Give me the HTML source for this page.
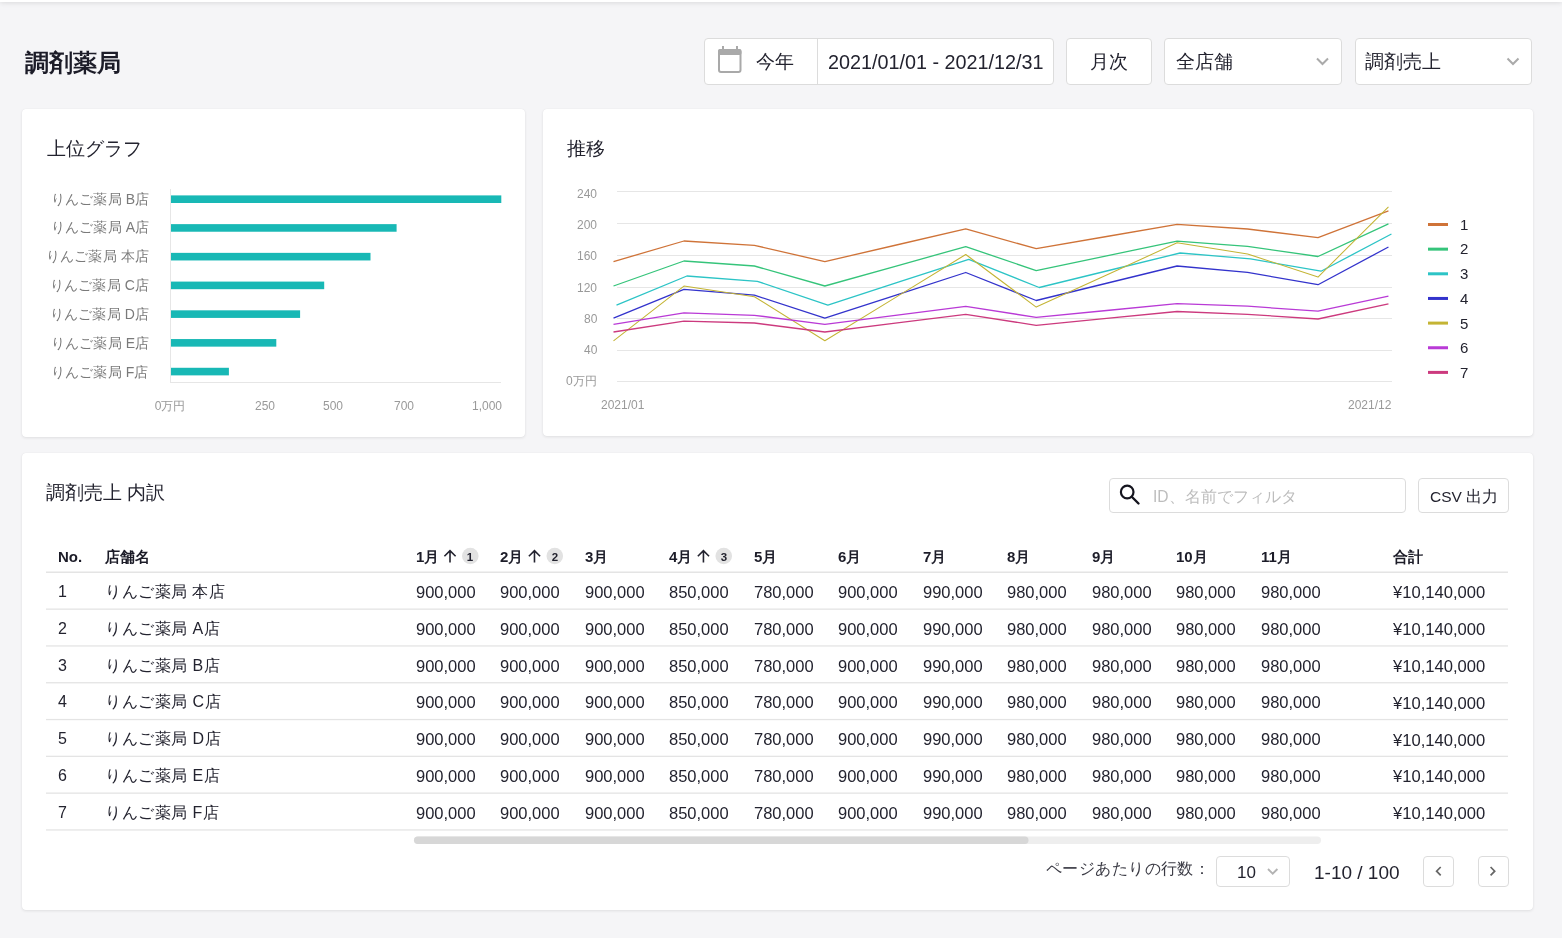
<!DOCTYPE html><html lang="ja"><head><meta charset="utf-8"><title>調剤薬局</title><style>
*{box-sizing:border-box;margin:0;padding:0}
html,body{width:1562px;height:938px;overflow:hidden;background:#f5f5f7;font-family:"Liberation Sans",sans-serif;color:#23232f}
.t{position:absolute;white-space:nowrap;line-height:1;will-change:transform}
.box{position:absolute;background:#fff;border:1px solid #dcdcdc;border-radius:4px}
.card{position:absolute;background:#fff;border-radius:4px;box-shadow:0 1px 3px rgba(0,0,0,0.09),0 0 1px rgba(0,0,0,0.10)}
.hdr{position:absolute;left:0;top:-60px;width:1562px;height:62px;background:#fff;box-shadow:0 1px 5px rgba(0,0,0,0.11)}
svg{position:absolute;left:0;top:0}
</style></head><body>
<div class="hdr"></div>
<div class="t" style="left:25px;top:51.6px;font-size:23.6px;color:#1c1c28;font-weight:bold;">調剤薬局</div>
<div class="box" style="left:704px;top:38px;width:350px;height:47px"></div>
<div style="position:absolute;left:817px;top:39px;width:1px;height:45px;background:#dcdcdc"></div>
<svg width="1562" height="938" style="pointer-events:none"><rect x="719" y="50" width="21.5" height="22" rx="2" fill="none" stroke="#a9a9a9" stroke-width="2"/><rect x="718" y="49" width="23.5" height="6" rx="2" fill="#a9a9a9"/><rect x="722" y="46" width="2" height="4" fill="#a9a9a9"/><rect x="736" y="46" width="2" height="4" fill="#a9a9a9"/></svg>
<div class="t" style="left:756px;top:51.5px;font-size:19px;color:#23232f;font-weight:normal;">今年</div>
<div class="t" style="left:827.5px;top:52.8px;font-size:19.8px;color:#23232f;font-weight:normal;">2021/01/01 - 2021/12/31</div>
<div class="box" style="left:1066px;top:38px;width:86px;height:47px"></div>
<div class="t" style="left:1089.5px;top:51.7px;font-size:19px;color:#23232f;font-weight:normal;">月次</div>
<div class="box" style="left:1164px;top:38px;width:178px;height:47px"></div>
<div class="t" style="left:1175.6px;top:52px;font-size:19px;color:#23232f;font-weight:normal;">全店舗</div>
<div class="box" style="left:1355px;top:38px;width:177px;height:47px"></div>
<div class="t" style="left:1365px;top:52px;font-size:19px;color:#23232f;font-weight:normal;">調剤売上</div>
<svg width="1562" height="938"><path d="M1317 58.5 L1322.5 64.0 L1328 58.5" fill="none" stroke="#aaaaaa" stroke-width="2"/><path d="M1507.5 58.5 L1513.0 64.0 L1518.5 58.5" fill="none" stroke="#aaaaaa" stroke-width="2"/></svg>
<div class="card" style="left:22px;top:109px;width:503px;height:328px"></div>
<div class="card" style="left:543px;top:109px;width:990px;height:327px"></div>
<div class="card" style="left:22px;top:453px;width:1511px;height:457px"></div>
<div class="t" style="left:46.5px;top:139px;font-size:19px;color:#23232f;font-weight:normal;">上位グラフ</div>
<svg width="1562" height="938"><rect x="170" y="189" width="1" height="194" fill="#e6e6e6"/><rect x="170" y="382" width="331" height="1" fill="#e6e6e6"/><rect x="171" y="195.40" width="330.30" height="7.6" fill="#18b8b5"/><rect x="171" y="224.13" width="225.60" height="7.6" fill="#18b8b5"/><rect x="171" y="252.86" width="199.50" height="7.6" fill="#18b8b5"/><rect x="171" y="281.59" width="153.20" height="7.6" fill="#18b8b5"/><rect x="171" y="310.32" width="129.10" height="7.6" fill="#18b8b5"/><rect x="171" y="339.05" width="105.30" height="7.6" fill="#18b8b5"/><rect x="171" y="367.78" width="57.90" height="7.6" fill="#18b8b5"/></svg>
<div class="t" style="right:1413px;top:191.5px;font-size:14px;letter-spacing:0.15px;color:#7a7a7a">りんご薬局 B店</div>
<div class="t" style="right:1413px;top:220.3px;font-size:14px;letter-spacing:0.15px;color:#7a7a7a">りんご薬局 A店</div>
<div class="t" style="right:1413px;top:249.2px;font-size:14px;letter-spacing:0.15px;color:#7a7a7a">りんご薬局 本店</div>
<div class="t" style="right:1413px;top:278.1px;font-size:14px;letter-spacing:0.15px;color:#7a7a7a">りんご薬局 C店</div>
<div class="t" style="right:1413px;top:306.9px;font-size:14px;letter-spacing:0.15px;color:#7a7a7a">りんご薬局 D店</div>
<div class="t" style="right:1413px;top:335.8px;font-size:14px;letter-spacing:0.15px;color:#7a7a7a">りんご薬局 E店</div>
<div class="t" style="right:1413px;top:364.6px;font-size:14px;letter-spacing:0.15px;color:#7a7a7a">りんご薬局 F店</div>
<div class="t" style="left:130px;width:80px;text-align:center;top:400px;font-size:12px;color:#999">0万円</div>
<div class="t" style="left:224.8px;width:80px;text-align:center;top:400px;font-size:12px;color:#999">250</div>
<div class="t" style="left:293.4px;width:80px;text-align:center;top:400px;font-size:12px;color:#999">500</div>
<div class="t" style="left:363.6px;width:80px;text-align:center;top:400px;font-size:12px;color:#999">700</div>
<div class="t" style="left:447px;width:80px;text-align:center;top:400px;font-size:12px;color:#999">1,000</div>
<div class="t" style="left:567px;top:139px;font-size:19px;color:#23232f;font-weight:normal;">推移</div>
<svg width="1562" height="938"><rect x="617" y="191" width="775" height="1" fill="#e6e6e6"/><rect x="617" y="223" width="775" height="1" fill="#e6e6e6"/><rect x="617" y="255" width="775" height="1" fill="#e6e6e6"/><rect x="617" y="287" width="775" height="1" fill="#e6e6e6"/><rect x="617" y="318" width="775" height="1" fill="#e6e6e6"/><rect x="617" y="350" width="775" height="1" fill="#e6e6e6"/><rect x="617" y="381" width="775" height="1" fill="#e6e6e6"/><polyline points="613.50,261.60 683.95,241.00 754.40,245.30 824.85,261.60 895.30,245.25 965.75,228.90 1036.20,248.70 1106.65,236.50 1177.10,224.30 1247.55,229.00 1318.00,237.60 1388.45,210.80" fill="none" stroke="#cf7338" stroke-width="1.3" stroke-linejoin="round"/><polyline points="613.50,286.00 683.95,261.00 754.40,266.00 824.85,286.00 895.30,266.30 965.75,246.60 1036.20,270.60 1106.65,255.85 1177.10,241.10 1247.55,246.30 1318.00,256.50 1388.45,223.80" fill="none" stroke="#35c47a" stroke-width="1.3" stroke-linejoin="round"/><polyline points="616.50,305.10 686.95,276.00 757.40,281.30 827.85,305.10 898.30,282.20 968.75,259.30 1039.20,287.50 1109.65,270.25 1180.10,253.00 1250.55,258.90 1321.00,271.20 1391.45,234.00" fill="none" stroke="#2cc4c6" stroke-width="1.3" stroke-linejoin="round"/><polyline points="613.50,318.20 683.95,289.40 754.40,295.20 824.85,318.20 895.30,295.35 965.75,272.50 1036.20,300.50 1106.65,283.25 1177.10,266.00 1247.55,272.40 1318.00,284.70 1388.45,247.00" fill="none" stroke="#3333cc" stroke-width="1.3" stroke-linejoin="round"/><polyline points="613.50,340.80 683.95,286.10 754.40,296.70 824.85,340.80 895.30,297.65 965.75,254.50 1036.20,307.10 1106.65,274.95 1177.10,242.80 1247.55,253.90 1318.00,277.10 1388.45,206.80" fill="none" stroke="#c4b434" stroke-width="1.05" stroke-linejoin="round"/><polyline points="613.50,324.30 683.95,312.80 754.40,315.30 824.85,324.30 895.30,315.30 965.75,306.30 1036.20,317.40 1106.65,310.50 1177.10,303.60 1247.55,306.20 1318.00,311.20 1388.45,296.10" fill="none" stroke="#b93ad6" stroke-width="1.3" stroke-linejoin="round"/><polyline points="613.50,332.00 683.95,321.10 754.40,323.00 824.85,332.00 895.30,323.20 965.75,314.40 1036.20,325.30 1106.65,318.40 1177.10,311.50 1247.55,314.30 1318.00,319.00 1388.45,303.90" fill="none" stroke="#cc3a7e" stroke-width="1.3" stroke-linejoin="round"/><rect x="1428" y="223.00" width="20" height="3" fill="#cf7338"/><rect x="1428" y="247.65" width="20" height="3" fill="#35c47a"/><rect x="1428" y="272.30" width="20" height="3" fill="#2cc4c6"/><rect x="1428" y="296.95" width="20" height="3" fill="#3333cc"/><rect x="1428" y="321.60" width="20" height="3" fill="#c4b434"/><rect x="1428" y="346.25" width="20" height="3" fill="#b93ad6"/><rect x="1428" y="370.90" width="20" height="3" fill="#cc3a7e"/></svg>
<div class="t" style="right:965px;top:187.8px;font-size:12px;color:#999">240</div>
<div class="t" style="right:965px;top:219.0px;font-size:12px;color:#999">200</div>
<div class="t" style="right:965px;top:250.3px;font-size:12px;color:#999">160</div>
<div class="t" style="right:965px;top:281.6px;font-size:12px;color:#999">120</div>
<div class="t" style="right:965px;top:312.8px;font-size:12px;color:#999">80</div>
<div class="t" style="right:965px;top:344.1px;font-size:12px;color:#999">40</div>
<div class="t" style="right:965px;top:375.4px;font-size:12px;color:#999">0万円</div>
<div class="t" style="left:600.5px;top:399px;font-size:12px;color:#999;font-weight:normal;">2021/01</div>
<div class="t" style="right:171px;top:399px;font-size:12px;color:#999">2021/12</div>
<div class="t" style="left:1459.5px;top:216.5px;font-size:15px;color:#23232f;font-weight:normal;">1</div>
<div class="t" style="left:1459.5px;top:241.28px;font-size:15px;color:#23232f;font-weight:normal;">2</div>
<div class="t" style="left:1459.5px;top:266.06px;font-size:15px;color:#23232f;font-weight:normal;">3</div>
<div class="t" style="left:1459.5px;top:290.84000000000003px;font-size:15px;color:#23232f;font-weight:normal;">4</div>
<div class="t" style="left:1459.5px;top:315.62px;font-size:15px;color:#23232f;font-weight:normal;">5</div>
<div class="t" style="left:1459.5px;top:340.4px;font-size:15px;color:#23232f;font-weight:normal;">6</div>
<div class="t" style="left:1459.5px;top:365.18px;font-size:15px;color:#23232f;font-weight:normal;">7</div>
<div class="t" style="left:46px;top:484px;font-size:18.5px;color:#23232f;font-weight:normal;">調剤売上 内訳</div>
<div class="box" style="left:1109px;top:478px;width:297px;height:35px"></div>
<svg width="1562" height="938"><circle cx="1127.2" cy="492" r="6.3" fill="none" stroke="#15151f" stroke-width="2.2"/><path d="M1132 497 L1138.5 503.5" stroke="#15151f" stroke-width="2.4" stroke-linecap="round"/></svg>
<div class="t" style="left:1152.5px;top:489px;font-size:15.6px;color:#bdbdbd;font-weight:normal;">ID、名前でフィルタ</div>
<div class="box" style="left:1418px;top:478px;width:91px;height:35px"></div>
<div class="t" style="left:1430px;top:488.5px;font-size:15.5px;color:#23232f;font-weight:normal;">CSV 出力</div>
<div class="t" style="left:58px;top:548.5px;font-size:15px;color:#1c1c28;font-weight:bold;">No.</div>
<div class="t" style="left:104.5px;top:548.5px;font-size:15px;color:#1c1c28;font-weight:bold;">店舗名</div>
<div class="t" style="left:415.9px;top:548.5px;font-size:15px;color:#1c1c28;font-weight:bold;">1月</div>
<div class="t" style="left:500.38px;top:548.5px;font-size:15px;color:#1c1c28;font-weight:bold;">2月</div>
<div class="t" style="left:584.86px;top:548.5px;font-size:15px;color:#1c1c28;font-weight:bold;">3月</div>
<div class="t" style="left:669.3399999999999px;top:548.5px;font-size:15px;color:#1c1c28;font-weight:bold;">4月</div>
<div class="t" style="left:753.8199999999999px;top:548.5px;font-size:15px;color:#1c1c28;font-weight:bold;">5月</div>
<div class="t" style="left:838.3px;top:548.5px;font-size:15px;color:#1c1c28;font-weight:bold;">6月</div>
<div class="t" style="left:922.78px;top:548.5px;font-size:15px;color:#1c1c28;font-weight:bold;">7月</div>
<div class="t" style="left:1007.26px;top:548.5px;font-size:15px;color:#1c1c28;font-weight:bold;">8月</div>
<div class="t" style="left:1091.74px;top:548.5px;font-size:15px;color:#1c1c28;font-weight:bold;">9月</div>
<div class="t" style="left:1176.22px;top:548.5px;font-size:15px;color:#1c1c28;font-weight:bold;">10月</div>
<div class="t" style="left:1260.7px;top:548.5px;font-size:15px;color:#1c1c28;font-weight:bold;">11月</div>
<div class="t" style="left:1392.8px;top:548.5px;font-size:15px;color:#1c1c28;font-weight:bold;">合計</div>
<svg width="1562" height="938"><path d="M444.4 556.3 L450.0 550.7 L455.6 556.3 M450.0 551.2 L450.0 562.6" fill="none" stroke="#23232f" stroke-width="1.6"/><circle cx="470.30" cy="556" r="8.3" fill="#e2e2e2"/><path d="M528.88 556.3 L534.48 550.7 L540.08 556.3 M534.48 551.2 L534.48 562.6" fill="none" stroke="#23232f" stroke-width="1.6"/><circle cx="554.78" cy="556" r="8.3" fill="#e2e2e2"/><path d="M697.8399999999999 556.3 L703.4399999999999 550.7 L709.04 556.3 M703.4399999999999 551.2 L703.4399999999999 562.6" fill="none" stroke="#23232f" stroke-width="1.6"/><circle cx="723.74" cy="556" r="8.3" fill="#e2e2e2"/><rect x="46" y="571.5" width="1462" height="1.5" fill="#e4e4e4"/><rect x="46" y="608.50" width="1462" height="1.3" fill="#e4e4e4"/><rect x="46" y="645.30" width="1462" height="1.3" fill="#e4e4e4"/><rect x="46" y="682.10" width="1462" height="1.3" fill="#e4e4e4"/><rect x="46" y="718.90" width="1462" height="1.3" fill="#e4e4e4"/><rect x="46" y="755.70" width="1462" height="1.3" fill="#e4e4e4"/><rect x="46" y="792.50" width="1462" height="1.3" fill="#e4e4e4"/><rect x="46" y="829.30" width="1462" height="1.3" fill="#e4e4e4"/><rect x="414" y="836.5" width="907" height="7.5" rx="3.75" fill="#eeeeee"/><rect x="414" y="836.5" width="614.5" height="7.5" rx="3.75" fill="#d7d7d7"/></svg>
<div class="t" style="left:462.30px;width:16px;text-align:center;top:551.5px;font-size:11.5px;font-weight:bold;color:#23232f">1</div>
<div class="t" style="left:546.78px;width:16px;text-align:center;top:551.5px;font-size:11.5px;font-weight:bold;color:#23232f">2</div>
<div class="t" style="left:715.74px;width:16px;text-align:center;top:551.5px;font-size:11.5px;font-weight:bold;color:#23232f">3</div>
<div class="t" style="left:58px;top:584.0px;font-size:16px;color:#23232f;font-weight:normal;">1</div>
<div class="t" style="left:104.5px;top:584.0px;font-size:16px;color:#23232f;font-weight:normal;letter-spacing:0.5px">りんご薬局 本店</div>
<div class="t" style="left:415.9px;top:584.0px;font-size:16.5px;color:#23232f;font-weight:normal;">900,000</div>
<div class="t" style="left:500.38px;top:584.0px;font-size:16.5px;color:#23232f;font-weight:normal;">900,000</div>
<div class="t" style="left:584.86px;top:584.0px;font-size:16.5px;color:#23232f;font-weight:normal;">900,000</div>
<div class="t" style="left:669.3399999999999px;top:584.0px;font-size:16.5px;color:#23232f;font-weight:normal;">850,000</div>
<div class="t" style="left:753.8199999999999px;top:584.0px;font-size:16.5px;color:#23232f;font-weight:normal;">780,000</div>
<div class="t" style="left:838.3px;top:584.0px;font-size:16.5px;color:#23232f;font-weight:normal;">900,000</div>
<div class="t" style="left:922.78px;top:584.0px;font-size:16.5px;color:#23232f;font-weight:normal;">990,000</div>
<div class="t" style="left:1007.26px;top:584.0px;font-size:16.5px;color:#23232f;font-weight:normal;">980,000</div>
<div class="t" style="left:1091.74px;top:584.0px;font-size:16.5px;color:#23232f;font-weight:normal;">980,000</div>
<div class="t" style="left:1176.22px;top:584.0px;font-size:16.5px;color:#23232f;font-weight:normal;">980,000</div>
<div class="t" style="left:1260.7px;top:584.0px;font-size:16.5px;color:#23232f;font-weight:normal;">980,000</div>
<div class="t" style="left:1392.8px;top:585.3px;font-size:16.6px;color:#23232f;font-weight:normal;">¥10,140,000</div>
<div class="t" style="left:58px;top:620.8px;font-size:16px;color:#23232f;font-weight:normal;">2</div>
<div class="t" style="left:104.5px;top:620.8px;font-size:16px;color:#23232f;font-weight:normal;letter-spacing:0.5px">りんご薬局 A店</div>
<div class="t" style="left:415.9px;top:620.8px;font-size:16.5px;color:#23232f;font-weight:normal;">900,000</div>
<div class="t" style="left:500.38px;top:620.8px;font-size:16.5px;color:#23232f;font-weight:normal;">900,000</div>
<div class="t" style="left:584.86px;top:620.8px;font-size:16.5px;color:#23232f;font-weight:normal;">900,000</div>
<div class="t" style="left:669.3399999999999px;top:620.8px;font-size:16.5px;color:#23232f;font-weight:normal;">850,000</div>
<div class="t" style="left:753.8199999999999px;top:620.8px;font-size:16.5px;color:#23232f;font-weight:normal;">780,000</div>
<div class="t" style="left:838.3px;top:620.8px;font-size:16.5px;color:#23232f;font-weight:normal;">900,000</div>
<div class="t" style="left:922.78px;top:620.8px;font-size:16.5px;color:#23232f;font-weight:normal;">990,000</div>
<div class="t" style="left:1007.26px;top:620.8px;font-size:16.5px;color:#23232f;font-weight:normal;">980,000</div>
<div class="t" style="left:1091.74px;top:620.8px;font-size:16.5px;color:#23232f;font-weight:normal;">980,000</div>
<div class="t" style="left:1176.22px;top:620.8px;font-size:16.5px;color:#23232f;font-weight:normal;">980,000</div>
<div class="t" style="left:1260.7px;top:620.8px;font-size:16.5px;color:#23232f;font-weight:normal;">980,000</div>
<div class="t" style="left:1392.8px;top:622.0999999999999px;font-size:16.6px;color:#23232f;font-weight:normal;">¥10,140,000</div>
<div class="t" style="left:58px;top:657.6px;font-size:16px;color:#23232f;font-weight:normal;">3</div>
<div class="t" style="left:104.5px;top:657.6px;font-size:16px;color:#23232f;font-weight:normal;letter-spacing:0.5px">りんご薬局 B店</div>
<div class="t" style="left:415.9px;top:657.6px;font-size:16.5px;color:#23232f;font-weight:normal;">900,000</div>
<div class="t" style="left:500.38px;top:657.6px;font-size:16.5px;color:#23232f;font-weight:normal;">900,000</div>
<div class="t" style="left:584.86px;top:657.6px;font-size:16.5px;color:#23232f;font-weight:normal;">900,000</div>
<div class="t" style="left:669.3399999999999px;top:657.6px;font-size:16.5px;color:#23232f;font-weight:normal;">850,000</div>
<div class="t" style="left:753.8199999999999px;top:657.6px;font-size:16.5px;color:#23232f;font-weight:normal;">780,000</div>
<div class="t" style="left:838.3px;top:657.6px;font-size:16.5px;color:#23232f;font-weight:normal;">900,000</div>
<div class="t" style="left:922.78px;top:657.6px;font-size:16.5px;color:#23232f;font-weight:normal;">990,000</div>
<div class="t" style="left:1007.26px;top:657.6px;font-size:16.5px;color:#23232f;font-weight:normal;">980,000</div>
<div class="t" style="left:1091.74px;top:657.6px;font-size:16.5px;color:#23232f;font-weight:normal;">980,000</div>
<div class="t" style="left:1176.22px;top:657.6px;font-size:16.5px;color:#23232f;font-weight:normal;">980,000</div>
<div class="t" style="left:1260.7px;top:657.6px;font-size:16.5px;color:#23232f;font-weight:normal;">980,000</div>
<div class="t" style="left:1392.8px;top:658.9px;font-size:16.6px;color:#23232f;font-weight:normal;">¥10,140,000</div>
<div class="t" style="left:58px;top:694.4px;font-size:16px;color:#23232f;font-weight:normal;">4</div>
<div class="t" style="left:104.5px;top:694.4px;font-size:16px;color:#23232f;font-weight:normal;letter-spacing:0.5px">りんご薬局 C店</div>
<div class="t" style="left:415.9px;top:694.4px;font-size:16.5px;color:#23232f;font-weight:normal;">900,000</div>
<div class="t" style="left:500.38px;top:694.4px;font-size:16.5px;color:#23232f;font-weight:normal;">900,000</div>
<div class="t" style="left:584.86px;top:694.4px;font-size:16.5px;color:#23232f;font-weight:normal;">900,000</div>
<div class="t" style="left:669.3399999999999px;top:694.4px;font-size:16.5px;color:#23232f;font-weight:normal;">850,000</div>
<div class="t" style="left:753.8199999999999px;top:694.4px;font-size:16.5px;color:#23232f;font-weight:normal;">780,000</div>
<div class="t" style="left:838.3px;top:694.4px;font-size:16.5px;color:#23232f;font-weight:normal;">900,000</div>
<div class="t" style="left:922.78px;top:694.4px;font-size:16.5px;color:#23232f;font-weight:normal;">990,000</div>
<div class="t" style="left:1007.26px;top:694.4px;font-size:16.5px;color:#23232f;font-weight:normal;">980,000</div>
<div class="t" style="left:1091.74px;top:694.4px;font-size:16.5px;color:#23232f;font-weight:normal;">980,000</div>
<div class="t" style="left:1176.22px;top:694.4px;font-size:16.5px;color:#23232f;font-weight:normal;">980,000</div>
<div class="t" style="left:1260.7px;top:694.4px;font-size:16.5px;color:#23232f;font-weight:normal;">980,000</div>
<div class="t" style="left:1392.8px;top:695.6999999999999px;font-size:16.6px;color:#23232f;font-weight:normal;">¥10,140,000</div>
<div class="t" style="left:58px;top:731.2px;font-size:16px;color:#23232f;font-weight:normal;">5</div>
<div class="t" style="left:104.5px;top:731.2px;font-size:16px;color:#23232f;font-weight:normal;letter-spacing:0.5px">りんご薬局 D店</div>
<div class="t" style="left:415.9px;top:731.2px;font-size:16.5px;color:#23232f;font-weight:normal;">900,000</div>
<div class="t" style="left:500.38px;top:731.2px;font-size:16.5px;color:#23232f;font-weight:normal;">900,000</div>
<div class="t" style="left:584.86px;top:731.2px;font-size:16.5px;color:#23232f;font-weight:normal;">900,000</div>
<div class="t" style="left:669.3399999999999px;top:731.2px;font-size:16.5px;color:#23232f;font-weight:normal;">850,000</div>
<div class="t" style="left:753.8199999999999px;top:731.2px;font-size:16.5px;color:#23232f;font-weight:normal;">780,000</div>
<div class="t" style="left:838.3px;top:731.2px;font-size:16.5px;color:#23232f;font-weight:normal;">900,000</div>
<div class="t" style="left:922.78px;top:731.2px;font-size:16.5px;color:#23232f;font-weight:normal;">990,000</div>
<div class="t" style="left:1007.26px;top:731.2px;font-size:16.5px;color:#23232f;font-weight:normal;">980,000</div>
<div class="t" style="left:1091.74px;top:731.2px;font-size:16.5px;color:#23232f;font-weight:normal;">980,000</div>
<div class="t" style="left:1176.22px;top:731.2px;font-size:16.5px;color:#23232f;font-weight:normal;">980,000</div>
<div class="t" style="left:1260.7px;top:731.2px;font-size:16.5px;color:#23232f;font-weight:normal;">980,000</div>
<div class="t" style="left:1392.8px;top:732.5px;font-size:16.6px;color:#23232f;font-weight:normal;">¥10,140,000</div>
<div class="t" style="left:58px;top:768.0px;font-size:16px;color:#23232f;font-weight:normal;">6</div>
<div class="t" style="left:104.5px;top:768.0px;font-size:16px;color:#23232f;font-weight:normal;letter-spacing:0.5px">りんご薬局 E店</div>
<div class="t" style="left:415.9px;top:768.0px;font-size:16.5px;color:#23232f;font-weight:normal;">900,000</div>
<div class="t" style="left:500.38px;top:768.0px;font-size:16.5px;color:#23232f;font-weight:normal;">900,000</div>
<div class="t" style="left:584.86px;top:768.0px;font-size:16.5px;color:#23232f;font-weight:normal;">900,000</div>
<div class="t" style="left:669.3399999999999px;top:768.0px;font-size:16.5px;color:#23232f;font-weight:normal;">850,000</div>
<div class="t" style="left:753.8199999999999px;top:768.0px;font-size:16.5px;color:#23232f;font-weight:normal;">780,000</div>
<div class="t" style="left:838.3px;top:768.0px;font-size:16.5px;color:#23232f;font-weight:normal;">900,000</div>
<div class="t" style="left:922.78px;top:768.0px;font-size:16.5px;color:#23232f;font-weight:normal;">990,000</div>
<div class="t" style="left:1007.26px;top:768.0px;font-size:16.5px;color:#23232f;font-weight:normal;">980,000</div>
<div class="t" style="left:1091.74px;top:768.0px;font-size:16.5px;color:#23232f;font-weight:normal;">980,000</div>
<div class="t" style="left:1176.22px;top:768.0px;font-size:16.5px;color:#23232f;font-weight:normal;">980,000</div>
<div class="t" style="left:1260.7px;top:768.0px;font-size:16.5px;color:#23232f;font-weight:normal;">980,000</div>
<div class="t" style="left:1392.8px;top:769.3px;font-size:16.6px;color:#23232f;font-weight:normal;">¥10,140,000</div>
<div class="t" style="left:58px;top:804.8px;font-size:16px;color:#23232f;font-weight:normal;">7</div>
<div class="t" style="left:104.5px;top:804.8px;font-size:16px;color:#23232f;font-weight:normal;letter-spacing:0.5px">りんご薬局 F店</div>
<div class="t" style="left:415.9px;top:804.8px;font-size:16.5px;color:#23232f;font-weight:normal;">900,000</div>
<div class="t" style="left:500.38px;top:804.8px;font-size:16.5px;color:#23232f;font-weight:normal;">900,000</div>
<div class="t" style="left:584.86px;top:804.8px;font-size:16.5px;color:#23232f;font-weight:normal;">900,000</div>
<div class="t" style="left:669.3399999999999px;top:804.8px;font-size:16.5px;color:#23232f;font-weight:normal;">850,000</div>
<div class="t" style="left:753.8199999999999px;top:804.8px;font-size:16.5px;color:#23232f;font-weight:normal;">780,000</div>
<div class="t" style="left:838.3px;top:804.8px;font-size:16.5px;color:#23232f;font-weight:normal;">900,000</div>
<div class="t" style="left:922.78px;top:804.8px;font-size:16.5px;color:#23232f;font-weight:normal;">990,000</div>
<div class="t" style="left:1007.26px;top:804.8px;font-size:16.5px;color:#23232f;font-weight:normal;">980,000</div>
<div class="t" style="left:1091.74px;top:804.8px;font-size:16.5px;color:#23232f;font-weight:normal;">980,000</div>
<div class="t" style="left:1176.22px;top:804.8px;font-size:16.5px;color:#23232f;font-weight:normal;">980,000</div>
<div class="t" style="left:1260.7px;top:804.8px;font-size:16.5px;color:#23232f;font-weight:normal;">980,000</div>
<div class="t" style="left:1392.8px;top:806.0999999999999px;font-size:16.6px;color:#23232f;font-weight:normal;">¥10,140,000</div>
<div class="t" style="left:1046px;top:861px;font-size:16px;color:#3a3a44;font-weight:normal;letter-spacing:0.42px">ページあたりの行数：</div>
<div class="box" style="left:1216px;top:856px;width:74px;height:31px"></div>
<div class="t" style="left:1237px;top:864px;font-size:17px;color:#23232f;font-weight:normal;">10</div>
<svg width="1562" height="938"><path d="M1268 869 L1272.7 873.7 L1277.4 869" fill="none" stroke="#b3b3b3" stroke-width="1.9"/></svg>
<div class="t" style="left:1314px;top:862.5px;font-size:19px;color:#23232f;font-weight:normal;">1-10 / 100</div>
<div class="box" style="left:1423px;top:856px;width:31px;height:31px"></div>
<div class="box" style="left:1478px;top:856px;width:31px;height:31px"></div>
<svg width="1562" height="938"><path d="M1440.7 867 L1436.6 871.2 L1440.7 875.4" fill="none" stroke="#666" stroke-width="1.7"/><path d="M1490.6 867 L1494.7 871.2 L1490.6 875.4" fill="none" stroke="#666" stroke-width="1.7"/></svg>
</body></html>
